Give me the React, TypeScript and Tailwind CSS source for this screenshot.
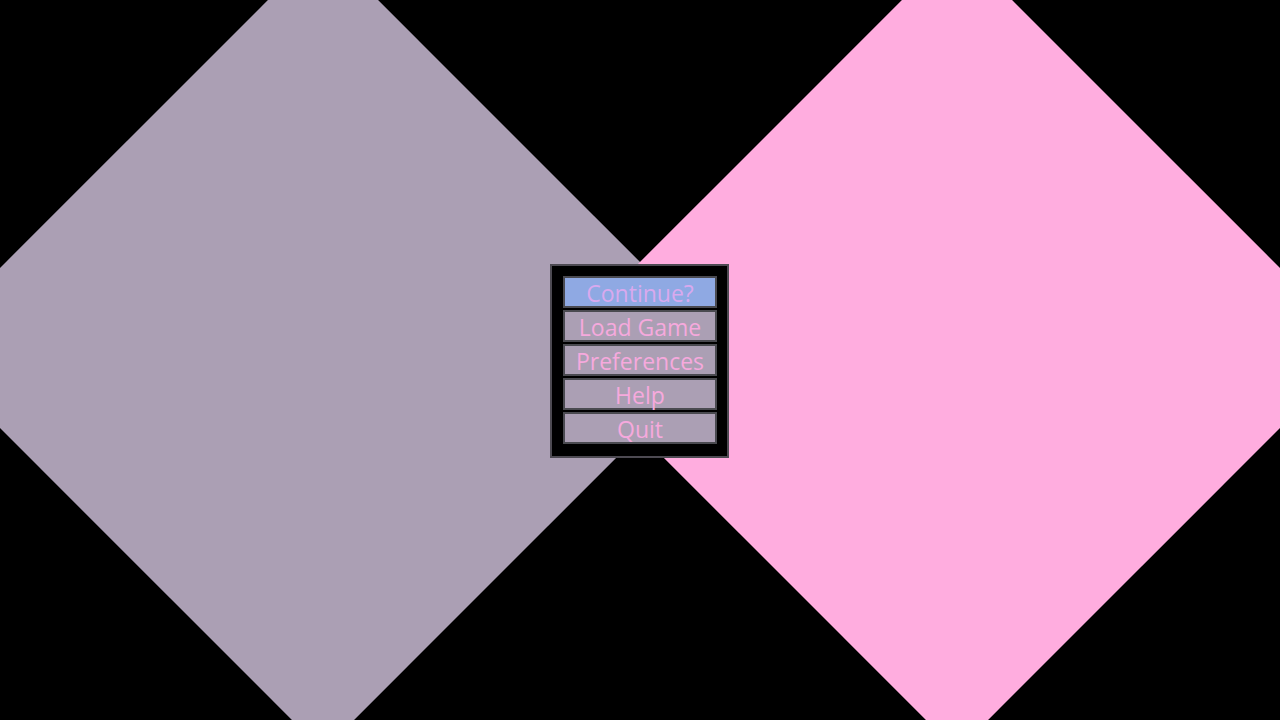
import React from "react";

const items = ["Continue?", "Load Game", "Preferences", "Help", "Quit"];

export default function App() {
  return (
    <div className="relative w-[1280px] h-[720px] overflow-hidden bg-black">
      <div className="absolute left-[38px] top-[63px] w-[570px] h-[570px] rotate-45 bg-[#ab9fb4]" />
      <div className="absolute left-[672px] top-[63px] w-[570px] h-[570px] rotate-45 bg-[#ffaddf]" />
      <div className="relative z-10 flex h-full w-full items-center justify-center pt-[2px] pr-[1px]">
        <div className="flex flex-col gap-[2px] border-2 border-[#4d4a52] bg-black pl-[11px] pr-[10px] pt-[10px] pb-[12px]">
          {items.map((t, i) => (
            <div
              key={t}
              className={
                "flex h-[32px] w-[154px] items-center justify-center border-2 border-[#4a4a50] pt-[3px] text-[23px] font-normal leading-none whitespace-nowrap " +
                (i === 0 ? "bg-[#8fa9e3] text-[#d9a9ee]" : "bg-[#ab9fb4] text-[#f6a9dd]")
              }
              style={{ fontFamily: "'Open Sans', 'Noto Sans', sans-serif" }}
            >
              {t}
            </div>
          ))}
        </div>
      </div>
    </div>
  );
}
